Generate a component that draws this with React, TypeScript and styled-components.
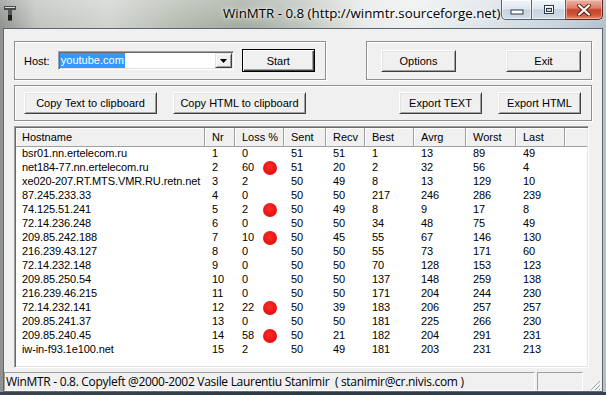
import React from "react";
import styled, { createGlobalStyle } from "styled-components";

const GlobalStyle = createGlobalStyle`
  html, body {
    margin: 0;
    padding: 0;
    width: 606px;
    height: 395px;
    overflow: hidden;
  }
  body {
    font-family: "Liberation Sans", Arial, sans-serif;
  }
`;

interface Hop {
  host: string;
  nr: number;
  loss: number;
  sent: number;
  recv: number;
  best: number;
  avrg: number;
  worst: number;
  last: number;
  alert?: boolean;
}

const hops: Hop[] = [
  { host: "bsr01.nn.ertelecom.ru", nr: 1, loss: 0, sent: 51, recv: 51, best: 1, avrg: 13, worst: 89, last: 49 },
  { host: "net184-77.nn.ertelecom.ru", nr: 2, loss: 60, sent: 51, recv: 20, best: 2, avrg: 32, worst: 56, last: 4, alert: true },
  { host: "xe020-207.RT.MTS.VMR.RU.retn.net", nr: 3, loss: 2, sent: 50, recv: 49, best: 8, avrg: 13, worst: 129, last: 10 },
  { host: "87.245.233.33", nr: 4, loss: 0, sent: 50, recv: 50, best: 217, avrg: 246, worst: 286, last: 239 },
  { host: "74.125.51.241", nr: 5, loss: 2, sent: 50, recv: 49, best: 8, avrg: 9, worst: 17, last: 8, alert: true },
  { host: "72.14.236.248", nr: 6, loss: 0, sent: 50, recv: 50, best: 34, avrg: 48, worst: 75, last: 49 },
  { host: "209.85.242.188", nr: 7, loss: 10, sent: 50, recv: 45, best: 55, avrg: 67, worst: 146, last: 130, alert: true },
  { host: "216.239.43.127", nr: 8, loss: 0, sent: 50, recv: 50, best: 55, avrg: 73, worst: 171, last: 60 },
  { host: "72.14.232.148", nr: 9, loss: 0, sent: 50, recv: 50, best: 70, avrg: 128, worst: 153, last: 123 },
  { host: "209.85.250.54", nr: 10, loss: 0, sent: 50, recv: 50, best: 137, avrg: 148, worst: 259, last: 138 },
  { host: "216.239.46.215", nr: 11, loss: 0, sent: 50, recv: 50, best: 171, avrg: 204, worst: 244, last: 230 },
  { host: "72.14.232.141", nr: 12, loss: 22, sent: 50, recv: 39, best: 183, avrg: 206, worst: 257, last: 257, alert: true },
  { host: "209.85.241.37", nr: 13, loss: 0, sent: 50, recv: 50, best: 181, avrg: 225, worst: 266, last: 230 },
  { host: "209.85.240.45", nr: 14, loss: 58, sent: 50, recv: 21, best: 182, avrg: 204, worst: 291, last: 231, alert: true },
  { host: "iw-in-f93.1e100.net", nr: 15, loss: 2, sent: 50, recv: 49, best: 181, avrg: 203, worst: 231, last: 213 },
];

const columns = ["Hostname", "Nr", "Loss %", "Sent", "Recv", "Best", "Avrg", "Worst", "Last"];
const gridCols = "189px 30px 49px 42px 39px 49px 52px 50px 49px 1fr";

const App = () => {
  return (
    <>
      <GlobalStyle />
      <Window>
        <TitleBar>
          <AppIcon width="12" height="15" viewBox="0 0 12 15">
            <rect x="0" y="0" width="12" height="4" fill="#4a4a4a" />
            <rect x="1" y="1" width="10" height="1" fill="#d8d8d8" />
            <rect x="4" y="4" width="4" height="11" fill="#555" />
            <rect x="4" y="9" width="4" height="5" fill="#1e1e1e" />
          </AppIcon>
          <TitleText>WinMTR - 0.8 (http://winmtr.sourceforge.net)</TitleText>
          <Controls>
            <CaptionButton $w={31} $first>
              <svg width="14" height="6" viewBox="0 0 14 6">
                <rect x="1" y="1" width="12" height="4" fill="#fff" stroke="#2c3a48" />
              </svg>
            </CaptionButton>
            <CaptionButton $w={34}>
              <svg width="12" height="11" viewBox="0 0 12 11">
                <rect x="1.5" y="1.5" width="9" height="8" fill="none" stroke="#2c3a48" />
                <rect x="2.5" y="2.5" width="7" height="6" fill="none" stroke="#fff" />
                <rect x="3.5" y="4.5" width="5" height="3" fill="none" stroke="#2c3a48" />
              </svg>
            </CaptionButton>
            <CloseButton>
              <svg width="14" height="12" viewBox="0 0 14 12">
                <path d="M2 1.5 L12 10.5 M12 1.5 L2 10.5" stroke="#5b1d12" strokeWidth="4" strokeLinecap="round" />
                <path d="M2 1.5 L12 10.5 M12 1.5 L2 10.5" stroke="#fff" strokeWidth="2.2" strokeLinecap="round" />
              </svg>
            </CloseButton>
          </Controls>
        </TitleBar>

        <Client>
          <Panes>
            <TopRow>
              <GroupBox $w={312} $h={39}>
                <HostLabel>Host:</HostLabel>
                <Combo>
                  <Selected>youtube.com</Selected>
                  <DropButton>
                    <svg width="7" height="4" viewBox="0 0 7 4">
                      <path d="M0 0 H7 L3.5 4 Z" fill="#000" />
                    </svg>
                  </DropButton>
                </Combo>
                <Button $w={74} $default>Start</Button>
              </GroupBox>
              <GroupBox $w={226} $h={39} $pad={14} $gap={50}>
                <Button $w={75}>Options</Button>
                <Button $w={75}>Exit</Button>
              </GroupBox>
            </TopRow>

            <GroupBox $h={36} $gap={16}>
              <Button $w={133}>Copy Text to clipboard</Button>
              <Button $w={133}>Copy HTML to clipboard</Button>
              <Spacer />
              <Button $w={83}>Export TEXT</Button>
              <Button $w={83}>Export HTML</Button>
            </GroupBox>

            <ListView>
              <HeaderRow>
                {columns.map((c, i) => (
                  <HeaderCell key={c} $first={i === 0}>
                    {c}
                  </HeaderCell>
                ))}
                <HeaderFiller />
              </HeaderRow>
              {hops.map((h) => (
                <Row key={h.nr}>
                  <Cell $first>{h.host}</Cell>
                  <Cell>{h.nr}</Cell>
                  <LossCell>
                    <span>{h.loss}</span>
                    {h.alert && <Dot />}
                  </LossCell>
                  <Cell>{h.sent}</Cell>
                  <Cell>{h.recv}</Cell>
                  <Cell>{h.best}</Cell>
                  <Cell>{h.avrg}</Cell>
                  <Cell>{h.worst}</Cell>
                  <Cell>{h.last}</Cell>
                </Row>
              ))}
            </ListView>
          </Panes>

          <StatusBar>
            <StatusPanel $w={531}>
              WinMTR - 0.8. Copyleft @2000-2002 Vasile Laurentiu Stanimir&nbsp; ( stanimir@cr.nivis.com )
            </StatusPanel>
            <StatusPanel $w={46} />
            <Grip width="12" height="12" viewBox="0 0 12 12">
              <path d="M11 2 L2 11 M11 6 L6 11 M11 10 L10 11" stroke="#a0a0a0" strokeWidth="1" />
              <path d="M12 3 L3 12 M12 7 L7 12" stroke="#fff" strokeWidth="1" />
            </Grip>
          </StatusBar>
        </Client>
        <BottomFrame />
      </Window>
    </>
  );
};

const Window = styled.div`
  width: 606px;
  height: 395px;
  display: flex;
  flex-direction: column;
  overflow: hidden;
  background:
    linear-gradient(180deg, rgba(255, 255, 255, 0.25) 0%, rgba(255, 255, 255, 0) 7%),
    linear-gradient(
      90deg,
      #8e928f 0%,
      #c0c3bf 6%,
      #d0d3cf 18%,
      #b3baaf 30%,
      #a2ab9f 40%,
      #bec4be 50%,
      #e7eae8 60%,
      #eef1f1 68%,
      #dde4e8 80%,
      #c8d3dc 92%,
      #b2c0cc 100%
    );
`;

const TitleBar = styled.div`
  height: 28px;
  display: flex;
  align-items: flex-start;
`;

const AppIcon = styled.svg`
  margin: 6px 0 0 4px;
  flex-shrink: 0;
`;

const TitleText = styled.div`
  margin: 5px 0 0 207px;
  font-family: "Open Sans", "Noto Sans", sans-serif;
  font-size: 13.3px;
  line-height: 17px;
  color: #000;
  white-space: nowrap;
  text-shadow: 0 0 8px rgba(255, 255, 255, 0.95), 0 0 3px rgba(255, 255, 255, 0.9);
`;

const Controls = styled.div`
  margin-left: auto;
  margin-right: 3px;
  display: flex;
`;

const CaptionButton = styled.div<{ $w: number; $first?: boolean }>`
  width: ${(p) => p.$w}px;
  height: 20px;
  box-sizing: border-box;
  display: flex;
  align-items: center;
  justify-content: center;
  padding-top: ${(p) => (p.$first ? 5 : 0)}px;
  border: 1px solid #56626f;
  border-top: none;
  border-left: ${(p) => (p.$first ? "1px solid #56626f" : "none")};
  border-radius: ${(p) => (p.$first ? "0 0 0 5px" : "0")};
  background: linear-gradient(180deg, #f1f5f9 0%, #dfe7ef 45%, #c6d2de 52%, #d2dde8 100%);
  box-shadow: inset 0 0 0 1px rgba(255, 255, 255, 0.6);
`;

const CloseButton = styled.div`
  width: 37px;
  height: 20px;
  box-sizing: border-box;
  display: flex;
  align-items: center;
  justify-content: center;
  border: 1px solid #5a2a22;
  border-top: none;
  border-left: none;
  border-radius: 0 0 5px 0;
  background: linear-gradient(180deg, #eab2a4 0%, #db806b 42%, #c8432b 52%, #cf5438 78%, #e58c6f 100%);
  box-shadow: inset 0 0 0 1px rgba(255, 220, 210, 0.5);
`;

const Client = styled.div`
  flex: 1;
  margin: 0 3px;
  border: 1px solid #5c6773;
  background: #f0f0f0;
  display: flex;
  flex-direction: column;
  min-height: 0;
`;

const Panes = styled.div`
  flex: 1;
  padding: 12px 10px 0 10px;
  display: flex;
  flex-direction: column;
  gap: 5px;
`;

const TopRow = styled.div`
  display: flex;
  justify-content: space-between;
`;

const GroupBox = styled.div<{ $w?: number; $h: number; $pad?: number; $gap?: number }>`
  ${(p) => (p.$w ? `width: ${p.$w}px;` : "")}
  height: ${(p) => p.$h}px;
  box-sizing: border-box;
  display: flex;
  align-items: center;
  gap: ${(p) => p.$gap ?? 8}px;
  padding: 0 10px 0 ${(p) => p.$pad ?? 9}px;
  border: 1px solid #8f8f8f;
  box-shadow: inset 1px 1px #fff, 1px 1px #fff;
`;

const HostLabel = styled.span`
  width: 26px;
  font-size: 11px;
  color: #000;
`;

const Combo = styled.div`
  width: 177px;
  height: 19px;
  box-sizing: border-box;
  display: flex;
  align-items: center;
  padding-left: 1px;
  background: #fff;
  border: 1px solid;
  border-color: #a0a0a0 #fff #fff #a0a0a0;
  box-shadow: inset 1px 1px #696969, inset -1px -1px #e3e3e3;
`;

const Selected = styled.span`
  padding: 0 1px;
  line-height: 15px;
  font-size: 11px;
  color: #fff;
  background: #3399ff;
`;

const DropButton = styled.div`
  margin-left: auto;
  margin-right: 1px;
  width: 17px;
  height: 15px;
  box-sizing: border-box;
  display: flex;
  align-items: center;
  justify-content: center;
  background: #f0f0f0;
  border: 1px solid;
  border-color: #e3e3e3 #404040 #404040 #e3e3e3;
  box-shadow: inset 1px 1px #fff, inset -1px -1px #a0a0a0;
`;

const Button = styled.button<{ $w: number; $default?: boolean }>`
  width: ${(p) => p.$w}px;
  height: ${(p) => (p.$default ? 23 : 22)}px;
  box-sizing: border-box;
  padding: 0;
  font-family: "Liberation Sans", Arial, sans-serif;
  font-size: 11px;
  color: #000;
  background: #f0f0f0;
  border: 1px solid;
  border-color: ${(p) => (p.$default ? "#000" : "#fff #404040 #404040 #fff")};
  box-shadow: ${(p) =>
    p.$default
      ? "inset 1px 1px #fff, inset -1px -1px #404040, inset -2px -2px #a0a0a0"
      : "inset 1px 1px #e3e3e3, inset -1px -1px #a0a0a0"};
`;

const Spacer = styled.div`
  flex: 1;
`;

const ListView = styled.div`
  height: 242px;
  margin-right: 3px;
  box-sizing: border-box;
  background: #fff;
  border: 1px solid;
  border-color: #a0a0a0 #fff #fff #a0a0a0;
  box-shadow: inset 1px 1px #696969, inset -1px -1px #e3e3e3;
  padding: 1px;
  overflow: hidden;
`;

const HeaderRow = styled.div`
  display: grid;
  grid-template-columns: ${gridCols};
  height: 18px;
  background: #f0f0f0;
`;

const HeaderCell = styled.div<{ $first?: boolean }>`
  padding-left: ${(p) => (p.$first ? 6 : 7)}px;
  font-size: 11px;
  line-height: 18px;
  color: #000;
  white-space: nowrap;
  box-sizing: border-box;
  border-right: 1px solid #a0a0a0;
  border-bottom: 1px solid #a0a0a0;
  box-shadow: inset 1px 1px #fff;
`;

const HeaderFiller = styled.div`
  border-bottom: 1px solid #a0a0a0;
  box-shadow: inset 1px 1px #fff;
`;

const Row = styled.div`
  display: grid;
  grid-template-columns: ${gridCols};
  height: 14px;
`;

const Cell = styled.div<{ $first?: boolean }>`
  padding-left: ${(p) => (p.$first ? 6 : 7)}px;
  font-size: 11px;
  letter-spacing: -0.1px;
  line-height: 15px;
  color: #000;
  white-space: nowrap;
  overflow: hidden;
`;

const LossCell = styled.div`
  display: flex;
  align-items: center;
  justify-content: space-between;
  padding: 0 7px;
  font-size: 11px;
  line-height: 15px;
  color: #000;
`;

const Dot = styled.span`
  width: 14px;
  height: 14px;
  border-radius: 50%;
  background: radial-gradient(circle at 45% 40%, #ff2a2a 0%, #e81414 60%, #d20c0c 100%);
`;

const StatusBar = styled.div`
  height: 19px;
  margin-top: 4px;
  display: flex;
  align-items: stretch;
  gap: 2px;
`;

const StatusPanel = styled.div<{ $w: number }>`
  width: ${(p) => p.$w}px;
  box-sizing: border-box;
  padding: 0 0 0 1px;
  border: 1px solid;
  border-color: #a0a0a0 #fff #fff #a0a0a0;
  font-family: "Open Sans", "Noto Sans", sans-serif;
  font-size: 12px;
  letter-spacing: -0.3px;
  line-height: 18px;
  color: #000;
  white-space: nowrap;
  overflow: hidden;
`;

const Grip = styled.svg`
  margin-left: auto;
  align-self: flex-end;
  margin-right: 1px;
`;

const BottomFrame = styled.div`
  height: 3px;
  background: linear-gradient(90deg, #3a4550 0%, #2d3a46 50%, #34424f 100%);
`;

export default App;
